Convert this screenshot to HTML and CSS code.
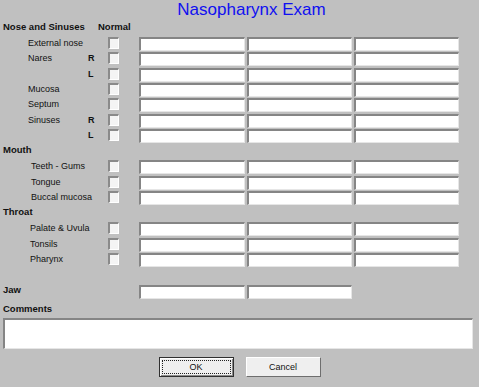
FILE: index.html
```html
<!DOCTYPE html>
<html>
	<head>
		<meta charset="utf-8" />
		<title>Nasopharynx Exam</title>
		<link rel="stylesheet" href="styles.css">
	</head>
	<body>
		<div class="exam">
			<h1 class="title">Nasopharynx Exam</h1>
			<div class="head">
				<span class="group-name">Nose and Sinuses</span>
				<span class="normal">Normal</span>
			</div>
			<div class="section nose">
				<div class="row">
					<span class="name">External nose</span><span class="side"></span>
					<span class="chk"><input type="checkbox" class="ipt-chk"></span>
					<span class="fields"><input class="ipt-txt"><input class="ipt-txt"><input class="ipt-txt"></span>
				</div>
				<div class="row">
					<span class="name">Nares</span><span class="side">R</span>
					<span class="chk"><input type="checkbox" class="ipt-chk"></span>
					<span class="fields"><input class="ipt-txt"><input class="ipt-txt"><input class="ipt-txt"></span>
				</div>
				<div class="row">
					<span class="name"></span><span class="side">L</span>
					<span class="chk"><input type="checkbox" class="ipt-chk"></span>
					<span class="fields"><input class="ipt-txt"><input class="ipt-txt"><input class="ipt-txt"></span>
				</div>
				<div class="row">
					<span class="name">Mucosa</span><span class="side"></span>
					<span class="chk"><input type="checkbox" class="ipt-chk"></span>
					<span class="fields"><input class="ipt-txt"><input class="ipt-txt"><input class="ipt-txt"></span>
				</div>
				<div class="row">
					<span class="name">Septum</span><span class="side"></span>
					<span class="chk"><input type="checkbox" class="ipt-chk"></span>
					<span class="fields"><input class="ipt-txt"><input class="ipt-txt"><input class="ipt-txt"></span>
				</div>
				<div class="row">
					<span class="name">Sinuses</span><span class="side">R</span>
					<span class="chk"><input type="checkbox" class="ipt-chk"></span>
					<span class="fields"><input class="ipt-txt"><input class="ipt-txt"><input class="ipt-txt"></span>
				</div>
				<div class="row">
					<span class="name"></span><span class="side">L</span>
					<span class="chk"><input type="checkbox" class="ipt-chk"></span>
					<span class="fields"><input class="ipt-txt"><input class="ipt-txt"><input class="ipt-txt"></span>
				</div>
			</div>
			<div class="group">Mouth</div>
			<div class="section mouth">
				<div class="row">
					<span class="name">Teeth - Gums</span><span class="side"></span>
					<span class="chk"><input type="checkbox" class="ipt-chk"></span>
					<span class="fields"><input class="ipt-txt"><input class="ipt-txt"><input class="ipt-txt"></span>
				</div>
				<div class="row">
					<span class="name">Tongue</span><span class="side"></span>
					<span class="chk"><input type="checkbox" class="ipt-chk"></span>
					<span class="fields"><input class="ipt-txt"><input class="ipt-txt"><input class="ipt-txt"></span>
				</div>
				<div class="row">
					<span class="name">Buccal mucosa</span><span class="side"></span>
					<span class="chk"><input type="checkbox" class="ipt-chk"></span>
					<span class="fields"><input class="ipt-txt"><input class="ipt-txt"><input class="ipt-txt"></span>
				</div>
			</div>
			<div class="group">Throat</div>
			<div class="section throat">
				<div class="row">
					<span class="name">Palate &amp; Uvula</span><span class="side"></span>
					<span class="chk"><input type="checkbox" class="ipt-chk"></span>
					<span class="fields"><input class="ipt-txt"><input class="ipt-txt"><input class="ipt-txt"></span>
				</div>
				<div class="row">
					<span class="name">Tonsils</span><span class="side"></span>
					<span class="chk"><input type="checkbox" class="ipt-chk"></span>
					<span class="fields"><input class="ipt-txt"><input class="ipt-txt"><input class="ipt-txt"></span>
				</div>
				<div class="row">
					<span class="name">Pharynx</span><span class="side"></span>
					<span class="chk"><input type="checkbox" class="ipt-chk"></span>
					<span class="fields"><input class="ipt-txt"><input class="ipt-txt"><input class="ipt-txt"></span>
				</div>
			</div>
			<div class="row jaw">
				<span class="jaw-label">Jaw</span>
				<span class="fields"><input class="ipt-txt"><input class="ipt-txt"></span>
			</div>
			<div class="group comments-label">Comments</div>
			<textarea class="comments"></textarea>
			<div class="buttons">
				<a class="btn ok"><span class="focus">OK</span></a>
				<a class="btn cancel">Cancel</a>
			</div>
		</div>
	</body>
</html>
```

FILE: styles.css
```css
*{
	margin: 0;
	padding: 0;
	box-sizing: border-box;
}
body{
	background-color: #c0c0c0;
	font-family: "Liberation Sans", Arial, sans-serif;
	font-size: 9px;
	color: #111;
}
a{
	text-decoration: none;
	color: inherit;
}
.exam{
	width: 479px;
	height: 387px;
}
/*标题*/
.title{
	height: 19px;
	padding-left: 24px;
	text-align: center;
	font-size: 17px;
	font-weight: normal;
	line-height: 19px;
	color: #1010f0;
}
.head{
	display: flex;
	height: 18px;
	line-height: 15px;
	font-size: 9.5px;
	font-weight: bold;
}
.head .group-name{
	width: 98px;
	padding-left: 3px;
}
.group{
	height: 16px;
	padding-left: 3px;
	line-height: 12px;
	font-size: 9.5px;
	font-weight: bold;
}
/*行*/
.row{
	display: flex;
	align-items: flex-start;
	height: 15.33px;
	line-height: 12px;
}
.row .name{
	width: 88px;
	padding-left: 28px;
	white-space: nowrap;
}
.mouth .row .name{
	padding-left: 31px;
}
.throat .row .name{
	padding-left: 30px;
}
.row .side{
	width: 18px;
	font-weight: bold;
}
.row .chk{
	width: 33px;
	padding-left: 2px;
}
.fields{
	display: flex;
	gap: 2px;
}
.ipt-txt{
	width: 105px;
	height: 14px;
	background-color: white;
	border-width: 2px 1px 1px 2px;
	border-style: solid;
	border-color: #858585 #e6e6e6 #e6e6e6 #858585;
	outline: none;
}
.fields .ipt-txt:first-child{
	width: 106px;
}
.ipt-chk{
	appearance: none;
	-webkit-appearance: none;
	display: block;
	width: 11px;
	height: 12px;
	background-color: #f4f4f4;
	border-width: 2px 1px 1px 2px;
	border-style: solid;
	border-color: #8a8a8a #ffffff #ffffff #8a8a8a;
}
/*下巴*/
.jaw{
	margin-top: 16.7px;
	height: 14px;
}
.jaw .jaw-label{
	width: 139px;
	padding-left: 3px;
	font-size: 9.5px;
	font-weight: bold;
	line-height: 10px;
}
.comments-label{
	height: 19px;
	padding-top: 4px;
}
.comments{
	display: block;
	width: 470px;
	height: 31px;
	margin-left: 3px;
	resize: none;
	background-color: white;
	border-width: 2px 1px 1px 2px;
	border-style: solid;
	border-color: #858585 #e6e6e6 #e6e6e6 #858585;
	outline: none;
}
/*按钮*/
.buttons{
	display: flex;
	justify-content: center;
	gap: 12px;
	margin-top: 8px;
}
.btn{
	display: block;
	width: 75px;
	height: 20px;
	line-height: 18px;
	text-align: center;
	background-color: #efefef;
	border-width: 1px;
	border-style: solid;
	border-color: #ffffff #6e6e6e #6e6e6e #ffffff;
	cursor: pointer;
}
.btn.ok{
	border-color: #303030;
	box-shadow: inset 1px 1px 0 #ffffff, inset -1px -1px 0 #8a8a8a;
	padding: 2px;
	line-height: 12px;
}
.btn.ok .focus{
	display: block;
	height: 14px;
	border: 1px dotted #222;
}
```
